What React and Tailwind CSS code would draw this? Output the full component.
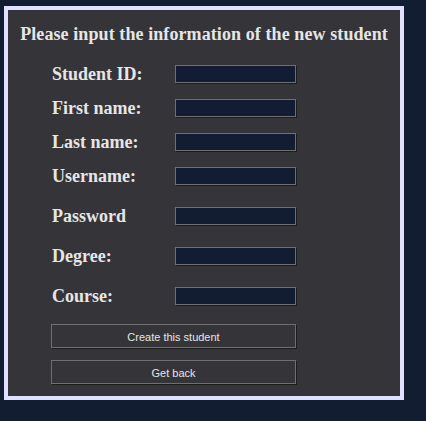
export default function App() {
  const rowsA = ["Student ID:", "First name:", "Last name:", "Username:"];
  const rowsB = ["Password", "Degree:", "Course:"];
  const serif = { fontFamily: '"Liberation Serif", "Times New Roman", serif' };
  const Input = () => (
    <div className="w-[121px] h-[18px] bg-[#121d33] border border-[#6f6f6f] shadow-[1px_1px_0_#1c1c1c]" />
  );
  return (
    <div className="w-full min-h-[421px] bg-[#121d31] pt-[6px] pl-1">
      <div className="w-[400px] h-[394px] border-4 border-[#e0e0ff] bg-[#353438] text-[#e6e6e6]" style={serif}>
        <h1 className="text-center font-bold text-[18px] tracking-[0.09px] leading-[22px] pt-[13px]">
          Please input the information of the new student
        </h1>
        <div className="pl-[44px] pt-[20px] flex flex-col">
          <div className="flex flex-col gap-[16px]">
            {rowsA.map((l) => (
              <div key={l} className="flex items-center h-[18px]">
                <span className="w-[123px] font-bold text-[18px] leading-[20px]">{l}</span>
                <Input />
              </div>
            ))}
          </div>
          <div className="flex flex-col gap-[22px] mt-[22px]">
            {rowsB.map((l) => (
              <div key={l} className="flex items-center h-[18px]">
                <span className="w-[123px] font-bold text-[18px] leading-[20px]">{l}</span>
                <Input />
              </div>
            ))}
          </div>
          <div className="flex flex-col gap-[12px] mt-[19px] -ml-px" style={{ fontFamily: '"Liberation Sans", Arial, sans-serif' }}>
            {["Create this student", "Get back"].map((t) => (
              <button
                key={t}
                className="w-[245px] h-[24px] pt-[2px] border border-[#6f6f6f] shadow-[1px_1px_0_#1c1c1c] bg-[#353438] text-[11px] text-[#e6e6e6] flex items-center justify-center"
              >
                {t}
              </button>
            ))}
          </div>
        </div>
      </div>
    </div>
  );
}
